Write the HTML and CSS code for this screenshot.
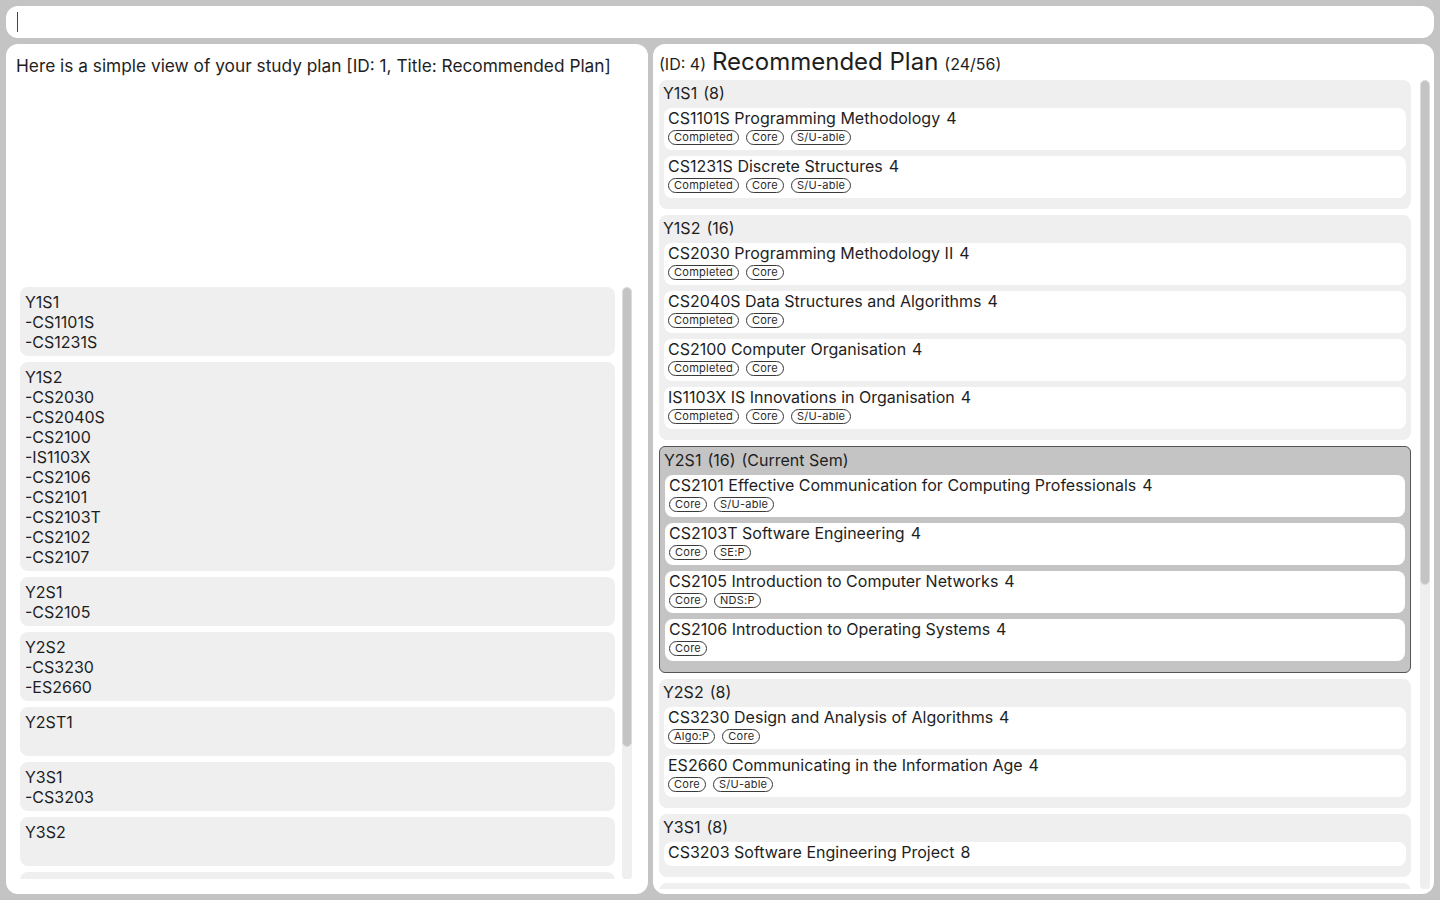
FILE: index.html
```html
<!DOCTYPE html>
<html lang="en">
<head>
<meta charset="utf-8">
<title>Study Plan</title>
<link rel="stylesheet" href="styles.css">
</head>
<body>
<div class="command-box"><span class="caret"></span></div>
<div class="main">
  <section class="panel left">
    <div class="intro">Here is a simple view of your study plan [ID: 1, Title: Recommended Plan]</div>
    <div class="list-wrap">
      <div class="simple-list">
        <div class="simple-card">Y1S1<br>-CS1101S<br>-CS1231S</div>
        <div class="simple-card">Y1S2<br>-CS2030<br>-CS2040S<br>-CS2100<br>-IS1103X<br>-CS2106<br>-CS2101<br>-CS2103T<br>-CS2102<br>-CS2107</div>
        <div class="simple-card">Y2S1<br>-CS2105</div>
        <div class="simple-card">Y2S2<br>-CS3230<br>-ES2660</div>
        <div class="simple-card">Y2ST1<br>&nbsp;</div>
        <div class="simple-card">Y3S1<br>-CS3203</div>
        <div class="simple-card">Y3S2<br>&nbsp;</div>
        <div class="simple-card">Y3ST1<br>&nbsp;</div>
      </div>
      <div class="scrollbar left-bar"><div class="thumb"></div></div>
    </div>
  </section>
  <section class="panel right">
    <div class="plan-header">
      <span class="small">(ID: 4)</span>
      <span class="title">Recommended Plan</span>
      <span class="small">(24/56)</span>
    </div>
    <div class="list-wrap right-wrap">
      <div class="sem-list">
        <div class="sem">
          <div class="sem-head">Y1S1<span class="sp">(8)</span></div>
          <div class="mod"><div class="mod-title">CS1101S Programming Methodology<span class="cr">4</span></div>
            <div class="tags"><span class="tag">Completed</span><span class="tag">Core</span><span class="tag">S/U-able</span></div></div>
          <div class="mod"><div class="mod-title">CS1231S Discrete Structures<span class="cr">4</span></div>
            <div class="tags"><span class="tag">Completed</span><span class="tag">Core</span><span class="tag">S/U-able</span></div></div>
        </div>
        <div class="sem">
          <div class="sem-head">Y1S2<span class="sp">(16)</span></div>
          <div class="mod"><div class="mod-title">CS2030 Programming Methodology II<span class="cr">4</span></div>
            <div class="tags"><span class="tag">Completed</span><span class="tag">Core</span></div></div>
          <div class="mod"><div class="mod-title">CS2040S Data Structures and Algorithms<span class="cr">4</span></div>
            <div class="tags"><span class="tag">Completed</span><span class="tag">Core</span></div></div>
          <div class="mod"><div class="mod-title">CS2100 Computer Organisation<span class="cr">4</span></div>
            <div class="tags"><span class="tag">Completed</span><span class="tag">Core</span></div></div>
          <div class="mod"><div class="mod-title">IS1103X IS Innovations in Organisation<span class="cr">4</span></div>
            <div class="tags"><span class="tag">Completed</span><span class="tag">Core</span><span class="tag">S/U-able</span></div></div>
        </div>
        <div class="sem current">
          <div class="sem-head">Y2S1<span class="sp">(16)</span><span class="sp">(Current Sem)</span></div>
          <div class="mod"><div class="mod-title">CS2101 Effective Communication for Computing Professionals<span class="cr">4</span></div>
            <div class="tags"><span class="tag">Core</span><span class="tag">S/U-able</span></div></div>
          <div class="mod"><div class="mod-title">CS2103T Software Engineering<span class="cr">4</span></div>
            <div class="tags"><span class="tag">Core</span><span class="tag">SE:P</span></div></div>
          <div class="mod"><div class="mod-title">CS2105 Introduction to Computer Networks<span class="cr">4</span></div>
            <div class="tags"><span class="tag">Core</span><span class="tag">NDS:P</span></div></div>
          <div class="mod"><div class="mod-title">CS2106 Introduction to Operating Systems<span class="cr">4</span></div>
            <div class="tags"><span class="tag">Core</span></div></div>
        </div>
        <div class="sem">
          <div class="sem-head">Y2S2<span class="sp">(8)</span></div>
          <div class="mod"><div class="mod-title">CS3230 Design and Analysis of Algorithms<span class="cr">4</span></div>
            <div class="tags"><span class="tag">Algo:P</span><span class="tag">Core</span></div></div>
          <div class="mod"><div class="mod-title">ES2660 Communicating in the Information Age<span class="cr">4</span></div>
            <div class="tags"><span class="tag">Core</span><span class="tag">S/U-able</span></div></div>
        </div>
        <div class="sem">
          <div class="sem-head">Y3S1<span class="sp">(8)</span></div>
          <div class="mod"><div class="mod-title">CS3203 Software Engineering Project<span class="cr">8</span></div></div>
        </div>
        <div class="sem">
          <div class="sem-head">Y3S2<span class="sp">(0)</span></div>
        </div>
      </div>
      <div class="scrollbar right-bar"><div class="thumb"></div></div>
    </div>
  </section>
</div>
</body>
</html>
```
FILE: styles.css
```css
* { box-sizing: border-box; }
html, body { margin: 0; height: 100%; }
body {
  background: #c4c4c4;
  padding: 6px;
  display: flex;
  flex-direction: column;
  gap: 6px;
  height: 900px;
  font-family: Inter, "Noto Sans", "Liberation Sans", sans-serif;
  color: #1e1e1e;
  overflow: hidden;
}
.command-box {
  height: 32px;
  background: #fff;
  border-radius: 12px;
  padding: 6px 0 0 11px;
  flex: none;
}
.caret {
  display: block;
  width: 1px;
  height: 20px;
  background: #444;
}
.main {
  flex: 1;
  display: flex;
  gap: 5px;
  min-height: 0;
}
.panel {
  background: #fff;
  border-radius: 12px;
  display: flex;
  flex-direction: column;
  min-height: 0;
}
.left {
  width: 642px;
  padding: 12px 16px 15px 10px;
}
.intro {
  font-size: 17.3px;
  line-height: 20px;
}
.list-wrap {
  display: flex;
  gap: 7px;
  overflow: hidden;
}
.left .list-wrap {
  margin-top: auto;
  margin-left: 4px;
  height: 592px;
}
.simple-list {
  flex: 1;
  display: flex;
  flex-direction: column;
  gap: 6px;
}
.simple-card {
  background: #efefef;
  border-radius: 8px;
  padding: 5px 5px 4px 5px;
  font-size: 16px;
  line-height: 20px;
  flex: none;
}
.scrollbar {
  width: 10px;
  flex: none;
  background: #efefef;
  border-radius: 5px;
}
.thumb {
  background: #c4c4c4;
  border-radius: 5px;
  border: 1px solid #dcdcdc;
}
.left-bar { height: 593px; }
.left-bar .thumb { height: 460px; }

.right {
  flex: 1;
  padding: 4px 4px 5px 6px;
}
.plan-header {
  display: flex;
  align-items: baseline;
  gap: 6px;
  height: 28px;
  line-height: 28px;
  margin-bottom: 4px;
  flex: none;
}
.plan-header .small { font-size: 16px; }
.plan-header .title { font-size: 24px; }
.right-wrap {
  flex: 1;
  gap: 9px;
  min-height: 0;
}
.sem-list {
  flex: 1;
  display: flex;
  flex-direction: column;
  gap: 6px;
}
.sem {
  background: #efefef;
  border-radius: 8px;
  padding: 3px 5px 5px 5px;
  flex: none;
}
.sem.current {
  background: #c4c4c4;
  border: 1px solid #555;
  border-radius: 6px;
}
.sem-head {
  font-size: 16px;
  line-height: 20px;
  margin: 0 0 5px -1px;
}
.sp { margin-left: 6px; }
.mod {
  background: #fff;
  border-radius: 8px;
  padding: 1px 4px 4px 4px;
  margin-bottom: 6px;
}
.mod-title {
  font-size: 16px;
  line-height: 19px;
  white-space: nowrap;
}
.cr { margin-left: 6px; }
.tags {
  display: flex;
  gap: 7px;
  margin: 2px 0 2px;
  height: 14px;
}
.tag {
  border: 1px solid #3a3a3a;
  border-radius: 8px;
  font-size: 11px;
  line-height: 13px;
  height: 15px;
  padding: 0 5px;
  letter-spacing: 0.25px;
  color: #2a2a2a;
}
.right-bar { height: 810px; }
.right-bar .thumb { height: 505px; }
```
